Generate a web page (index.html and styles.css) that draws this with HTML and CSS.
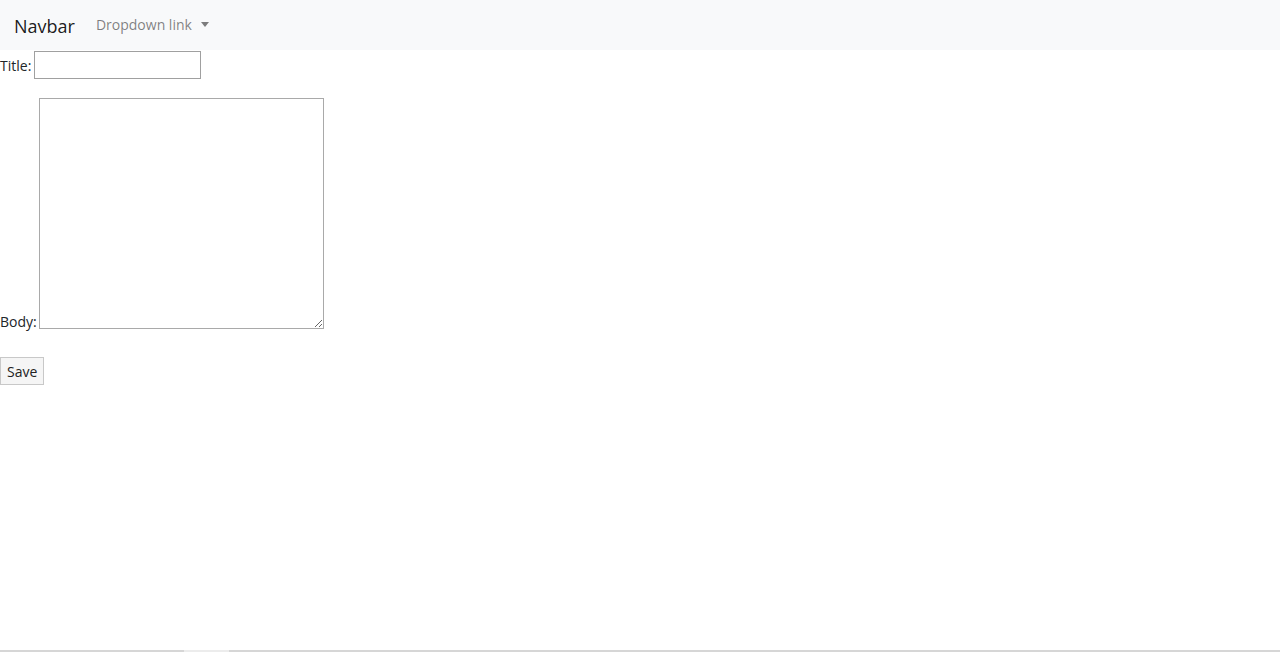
FILE: index.html
```html
<!DOCTYPE html>
<html lang="en">
<head>
  <meta charset="UTF-8" />
  <title>New post</title>
  <link rel="stylesheet" href="styles.css">
</head>
<body>

  <!-- Navbar -->
  <nav class="navbar">
    <a class="navbar-brand" href="#">Navbar</a>
    <a class="nav-link dropdown-toggle" href="#">Dropdown link</a>
  </nav>

  <!-- Form -->
  <form class="post-form">
    <div class="row">
      <label for="title">Title:</label>
      <input type="text" id="title" />
    </div>
    <div class="row body-row">
      <label for="body">Body:</label>
      <textarea id="body"></textarea>
    </div>
    <div class="row save-row">
      <button type="submit">Save</button>
    </div>
  </form>

  <div class="scrollbar"><span class="thumb"></span></div>
</body>
</html>
```

FILE: styles.css
```css
html, body {
  height: 100%;
}

body {
  margin: 0;
  font-family: "Open Sans", "Noto Sans", Arial, sans-serif;
  font-size: 14px;
  color: #212529;
  display: flex;
  flex-direction: column;
}

.navbar {
  background-color: #f8f9fa;
  height: 50px;
  display: flex;
  align-items: center;
  padding: 0 14px;
  box-sizing: border-box;
  flex-shrink: 0;
}

.navbar a {
  text-decoration: none;
}

.navbar-brand {
  font-size: 18px;
  color: rgba(0, 0, 0, 0.9);
  margin-right: 21px;
  margin-top: 1px;
}

.nav-link {
  color: rgba(0, 0, 0, 0.5);
  font-size: 14px;
  margin-top: -2px;
}

.dropdown-toggle::after {
  content: "";
  display: inline-block;
  margin-left: 9px;
  vertical-align: 3px;
  border-top: 5px solid;
  border-left: 4.5px solid transparent;
  border-right: 4.5px solid transparent;
}

.post-form {
  flex: 1;
}

.row {
  display: flex;
  align-items: flex-end;
}

label {
  line-height: 20px;
  margin-right: 3px;
}

input {
  width: 167px;
  height: 28px;
  box-sizing: border-box;
  border: 1px solid #a0a0a0;
  margin-top: 1px;
  font: inherit;
}

.row:first-child label {
  margin-bottom: 3px;
}

.body-row {
  margin-top: 19px;
}

.body-row label {
  margin-right: 2px;
  margin-bottom: -3px;
}

textarea {
  width: 285px;
  height: 231px;
  box-sizing: border-box;
  border: 1px solid #a9a9a9;
  font: inherit;
}

.save-row {
  margin-top: 28px;
}

button {
  font: inherit;
  height: 28px;
  padding: 0 6px;
  background: #f5f5f5;
  border: 1px solid #c8c8c8;
  color: #222;
}

.scrollbar {
  height: 2px;
  background: #d6d6d6;
  position: relative;
}

.thumb {
  position: absolute;
  left: 184px;
  width: 45px;
  height: 2px;
  background: #ececec;
}
```
